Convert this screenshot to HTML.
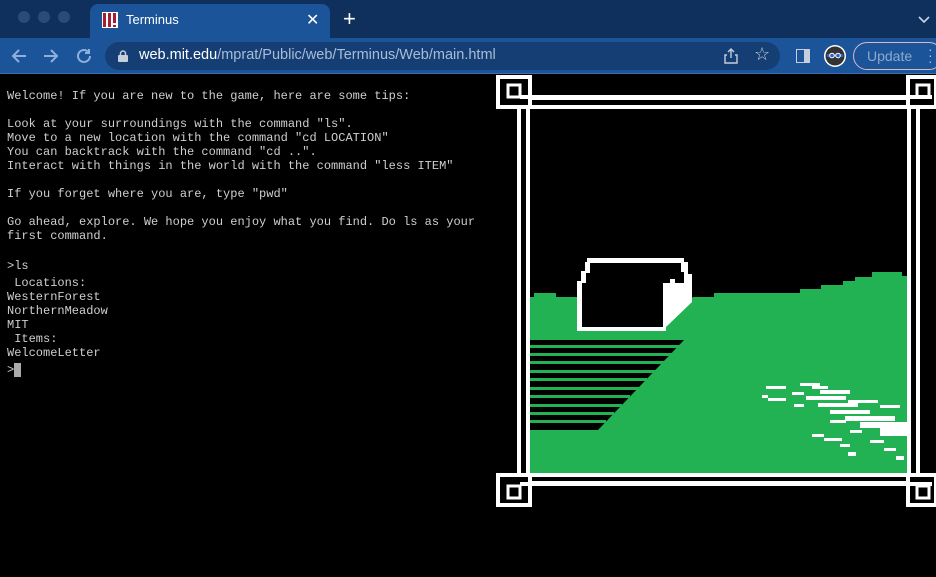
<!DOCTYPE html>
<html><head><meta charset="utf-8"><style>
*{margin:0;padding:0;box-sizing:border-box}
body{width:936px;height:577px;overflow:hidden;background:#000;font-family:"Liberation Sans",sans-serif;position:relative}
.tabbar{position:absolute;left:0;top:0;width:936px;height:38px;background:#0f2f5c}
.dot{position:absolute;top:11px;width:12px;height:12px;border-radius:50%;background:#2c4a78}
.tab{position:absolute;left:90px;top:4px;width:240px;height:34px;background:#1c5499;border-radius:8px 8px 0 0}
.toolbar{position:absolute;left:0;top:38px;width:936px;height:36px;background:#1c5499;border-bottom:1px solid #3a6fb0}
.url{position:absolute;left:105px;top:4px;width:675px;height:28px;border-radius:14px;background:#153f74}
pre{position:absolute;left:7px;font-family:"Liberation Mono","Courier New",monospace;font-size:12px;line-height:14px;color:#cfcfcf}
</style></head><body>
<div class="tabbar">
 <div class="dot" style="left:18px"></div><div class="dot" style="left:38px"></div><div class="dot" style="left:58px"></div>
 <div class="tab">
  <svg style="position:absolute;left:12px;top:8px" width="16" height="16" viewBox="0 0 16 16"><rect width="16" height="16" fill="#fff"/><rect x="1" y="1" width="3" height="14" fill="#a31f34"/><rect x="6" y="1" width="3" height="14" fill="#a31f34"/><rect x="11" y="1" width="3" height="10" fill="#a31f34"/><rect x="11" y="13" width="3" height="2" fill="#a31f34"/></svg>
  <span style="position:absolute;left:36px;top:8px;color:#fff;font-size:13px">Terminus</span>
  <span style="position:absolute;left:216px;top:6px;color:#fff;font-size:16px">✕</span>
 </div>
 <span style="position:absolute;left:343px;top:6px;color:#fff;font-size:22px;line-height:26px">+</span>
 <svg style="position:absolute;left:918px;top:16px" width="12" height="8"><path d="M1 1l5 5 5-5" stroke="#c8d4e6" stroke-width="1.6" fill="none"/></svg>
</div>
<div class="toolbar">
 <svg style="position:absolute;left:10px;top:9px" width="18" height="18"><path d="M16 9H3M9 3L3 9l6 6" stroke="#8fb0dc" stroke-width="2" fill="none"/></svg>
 <svg style="position:absolute;left:42px;top:9px" width="18" height="18"><path d="M2 9h13M9 3l6 6-6 6" stroke="#8fb0dc" stroke-width="2" fill="none"/></svg>
 <svg style="position:absolute;left:75px;top:9px" width="18" height="18"><path d="M15 9a6 6 0 1 1-2-4.5M14 2v4h-4" stroke="#8fb0dc" stroke-width="2" fill="none"/></svg>
 <div class="url">
  <svg style="position:absolute;left:13px;top:8px" width="10" height="12"><rect x="0" y="5" width="10" height="7" rx="1" fill="#c5cfdc"/><path d="M2.5 5V3.5a2.5 2.5 0 0 1 5 0V5" stroke="#c5cfdc" stroke-width="1.5" fill="none"/></svg>
  <span style="position:absolute;left:34px;top:5px;font-size:14.5px;color:#fff">web.mit.edu<span style="color:#a9bcd6">/mprat/Public/web/Terminus/Web/main.html</span></span>
  <svg style="position:absolute;left:619px;top:6px" width="14" height="16"><path d="M7 10V1M4 4l3-3 3 3M3 7H1v8h12V7h-2" stroke="#c5cfdc" stroke-width="1.4" fill="none"/></svg>
  <span style="position:absolute;left:649px;top:2px;color:#c5cfdc;font-size:18px">☆</span>
 </div>
 <svg style="position:absolute;left:796px;top:11px" width="14" height="14"><rect x="0.5" y="0.5" width="13" height="13" fill="none" stroke="#c5cfdc"/><rect x="8" y="1" width="5" height="12" fill="#c5cfdc"/></svg>
 <svg style="position:absolute;left:823px;top:6px" width="24" height="24"><circle cx="12" cy="12" r="11" fill="#fff"/><circle cx="12" cy="12" r="9.5" fill="#333"/><rect x="4" y="10" width="16" height="3" fill="#2a62c9"/><circle cx="9" cy="11.5" r="2.3" fill="none" stroke="#fff"/><circle cx="15" cy="11.5" r="2.3" fill="none" stroke="#fff"/></svg>
 <div style="position:absolute;left:853px;top:4px;width:90px;height:28px;border:1px solid #d9b8c4;border-radius:14px;color:#8fa9cc;font-size:14px;padding:5px 0 0 13px">Update</div>
 <span style="position:absolute;left:928px;top:8px;color:#aac0dd;font-size:14px;line-height:6px">·<br>·<br>·</span>
</div>

<pre style="top:89px">Welcome! If you are new to the game, here are some tips:

Look at your surroundings with the command "ls".
Move to a new location with the command "cd LOCATION"
You can backtrack with the command "cd ..".
Interact with things in the world with the command "less ITEM"

If you forget where you are, type "pwd"

Go ahead, explore. We hope you enjoy what you find. Do ls as your
first command.</pre>
<pre style="top:259px">&gt;ls</pre>
<pre style="top:276px"> Locations:
WesternForest
NorthernMeadow
MIT
 Items:
WelcomeLetter</pre>
<pre style="top:363px">&gt;<span style="background:#aaa">&#160;</span></pre>

<svg style="position:absolute;left:0;top:0" width="936" height="577">
 <!-- green field -->
 <path d="M530 297H534V293H556V297H578V331H666V321L693 297H714V293H800V289H821V285H843V281H855V277H872V272H902V276H907V473H530Z" fill="#22b153"/>
 <!-- building -->
 <path d="M587 258H684V262H688V274H692V302L666 327V331H577V281H581V271H585V262H587Z" fill="#fff"/>
 <path d="M590 263H681V279H670V283H663V327H582V283H586V273H590Z" fill="#000"/>
 <rect x="675" y="272" width="9" height="11" fill="#000"/>
 <!-- stripes -->
 <g fill="#000">
  <path d="M530 340H684L598 430H530Z"/>
 </g>
 <g fill="#22b153">
  <rect x="530" y="345" width="150" height="3"/><rect x="530" y="353" width="142" height="3"/><rect x="530" y="361" width="134" height="3"/><rect x="530" y="370" width="126" height="3"/><rect x="530" y="378" width="117" height="3"/><rect x="530" y="387" width="109" height="3"/><rect x="530" y="395" width="100" height="3"/><rect x="530" y="404" width="92" height="3"/><rect x="530" y="412" width="84" height="3"/><rect x="530" y="420" width="76" height="3"/>
 </g>
 <!-- swoosh -->
 <g fill="#fff">
  <rect x="766" y="386" width="20" height="3"/><rect x="800" y="383" width="20" height="3"/><rect x="762" y="395" width="6" height="3"/><rect x="768" y="398" width="18" height="3"/><rect x="792" y="392" width="12" height="3"/><rect x="794" y="404" width="10" height="3"/><rect x="812" y="386" width="16" height="3"/><rect x="820" y="390" width="30" height="4"/><rect x="806" y="396" width="40" height="4"/><rect x="818" y="403" width="40" height="4"/><rect x="830" y="410" width="40" height="4"/><rect x="848" y="400" width="30" height="3"/><rect x="845" y="416" width="50" height="5"/><rect x="860" y="422" width="48" height="6"/><rect x="880" y="428" width="28" height="8"/><rect x="812" y="434" width="12" height="3"/><rect x="824" y="438" width="18" height="3"/><rect x="840" y="444" width="10" height="3"/><rect x="848" y="452" width="8" height="4"/><rect x="830" y="420" width="16" height="3"/><rect x="850" y="430" width="12" height="3"/><rect x="870" y="440" width="14" height="3"/><rect x="884" y="448" width="12" height="3"/><rect x="896" y="456" width="8" height="4"/><rect x="880" y="405" width="20" height="3"/>
 </g>
 <!-- frame -->
 <g fill="none" stroke="#fff" stroke-width="4">
  <path d="M498 98H932M498 107H932"/>
  <path d="M498 475H932M498 483H932"/>
  <path d="M519 107V475M528 107V475M909 107V475M918 107V475"/>
  <rect x="498" y="77" width="32" height="30" fill="#000"/>
  <rect x="908" y="77" width="28" height="30" fill="#000"/>
  <rect x="498" y="475" width="32" height="30" fill="#000"/>
  <rect x="908" y="475" width="28" height="30" fill="#000"/>
 </g>
 <g fill="none" stroke="#fff" stroke-width="3">
  <rect x="508" y="85" width="12" height="12"/><rect x="917" y="85" width="12" height="12"/>
  <rect x="508" y="486" width="12" height="12"/><rect x="917" y="486" width="12" height="12"/>
 </g>
 <path d="M520 97H932M520 484H932" stroke="#fff" stroke-width="4"/>
</svg>
</body></html>
